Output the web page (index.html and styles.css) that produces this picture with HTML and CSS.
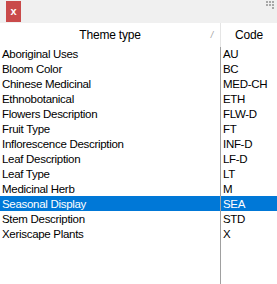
FILE: index.html
```html
<!DOCTYPE html>
<html>
<head>
<meta charset="utf-8">
<link rel="stylesheet" href="styles.css">
</head>
<body>
<div class="win">
  <div class="topbar">
    <div class="close">x</div>
    <div class="grip">
      <span></span><span></span><span></span>
      <span></span><span></span><span></span>
      <span class="off"></span><span class="off"></span><span></span>
    </div>
  </div>
  <div class="grid">
    <div class="head">
      <div class="hc1">Theme type<span class="sort">/</span></div>
      <div class="hc2">Code</div>
    </div>
    <div class="body">
      <div class="row"><div class="c1">Aboriginal Uses</div><div class="c2">AU</div></div>
      <div class="row"><div class="c1">Bloom Color</div><div class="c2">BC</div></div>
      <div class="row"><div class="c1">Chinese Medicinal</div><div class="c2">MED-CH</div></div>
      <div class="row"><div class="c1">Ethnobotanical</div><div class="c2">ETH</div></div>
      <div class="row"><div class="c1">Flowers Description</div><div class="c2">FLW-D</div></div>
      <div class="row"><div class="c1">Fruit Type</div><div class="c2">FT</div></div>
      <div class="row"><div class="c1">Inflorescence Description</div><div class="c2">INF-D</div></div>
      <div class="row"><div class="c1">Leaf Description</div><div class="c2">LF-D</div></div>
      <div class="row"><div class="c1">Leaf Type</div><div class="c2">LT</div></div>
      <div class="row"><div class="c1">Medicinal Herb</div><div class="c2">M</div></div>
      <div class="row sel"><div class="c1">Seasonal Display</div><div class="c2">SEA</div></div>
      <div class="row"><div class="c1">Stem Description</div><div class="c2">STD</div></div>
      <div class="row"><div class="c1">Xeriscape Plants</div><div class="c2">X</div></div>
      <div class="row fill"><div class="c1"></div><div class="c2"></div></div>
    </div>
  </div>
</div>
</body>
</html>
```
FILE: styles.css
```css
html, body { margin: 0; padding: 0; background: #fff; }
body { width: 277px; height: 284px; overflow: hidden; font-family: "Liberation Sans", Arial, sans-serif; font-size: 11.5px; color: #000; }
.win { display: flex; flex-direction: column; height: 284px; }
.topbar { height: 23px; background: #f0f0f0; display: flex; align-items: flex-start; justify-content: space-between; flex: none; }
.close { margin: 1px 0 0 6px; width: 15px; height: 21px; background: #c94a4a; color: #fff; font-size: 11px; font-weight: bold; display: flex; align-items: center; justify-content: center; line-height: 1; }
.grip { display: grid; grid-template-columns: repeat(3, 2px); grid-auto-rows: 2px; gap: 1px; margin: 1px 3px 0 0; }
.grip span { background: #a8a8a8; }
.grip span.off { background: transparent; }
.grid { flex: 1; display: flex; flex-direction: column; }
.head { display: grid; grid-template-columns: 221px 1fr; height: 23px; flex: none; font-size: 12px; letter-spacing: -0.2px; }
.hc1 { position: relative; text-align: center; line-height: 24px; border-right: 1px solid #e5e5e5; }
.sort { position: absolute; right: 7px; top: 0; color: #a0a0a0; font-size: 9px; font-style: italic; }
.hc2 { text-align: center; line-height: 24px; }
.body { flex: 1; display: flex; flex-direction: column; letter-spacing: -0.3px; }
.row { display: grid; grid-template-columns: 221px 1fr; height: 15px; line-height: 16px; }
.row .c1 { padding-left: 2px; border-right: 1px solid #a0a0a0; white-space: nowrap; }
.row .c2 { padding-left: 2px; }
.row.sel { background: #0078d7; color: #fff; }
.row.fill { flex: 1; }
```
